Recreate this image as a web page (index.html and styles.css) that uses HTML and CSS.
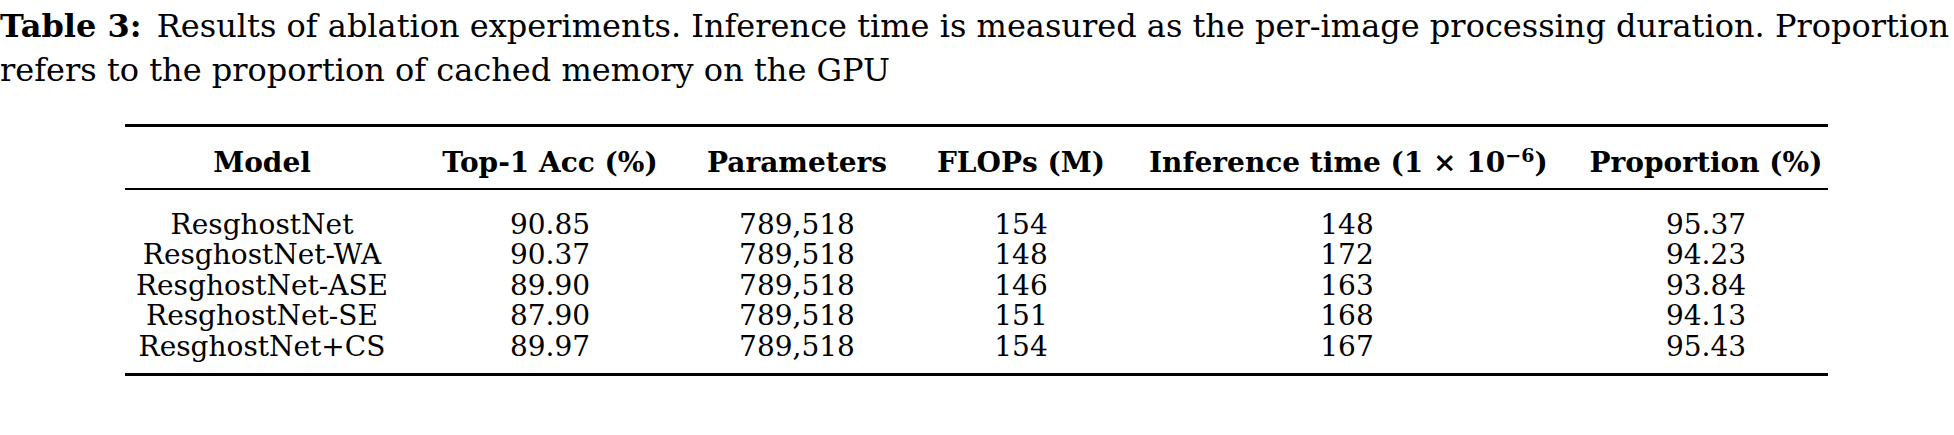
FILE: index.html
```html
<!DOCTYPE html>
<html lang="en">
<head>
    <meta charset="UTF-8">
    <title>Table 3</title>
    <link rel="stylesheet" href="styles.css">
</head>
<body>
    <p class="caption"><b class="label">Table 3:</b> Results of ablation experiments. Inference time is measured as the per-image processing duration. Proportion refers to the proportion of cached memory on the GPU</p>
    <div class="table-wrap">
        <table class="results">
            <colgroup>
                <col class="c-model">
                <col class="c-acc">
                <col class="c-params">
                <col class="c-flops">
                <col class="c-time">
                <col class="c-prop">
            </colgroup>
            <thead>
                <tr>
                    <th>Model</th>
                    <th>Top-1 Acc (%)</th>
                    <th>Parameters</th>
                    <th>FLOPs (M)</th>
                    <th>Inference time (1 × 10<sup>−6</sup>)</th>
                    <th class="last">Proportion (%)</th>
                </tr>
            </thead>
            <tbody>
                <tr>
                    <td>ResghostNet</td>
                    <td>90.85</td>
                    <td>789,518</td>
                    <td>154</td>
                    <td>148</td>
                    <td class="last">95.37</td>
                </tr>
                <tr>
                    <td>ResghostNet-WA</td>
                    <td>90.37</td>
                    <td>789,518</td>
                    <td>148</td>
                    <td>172</td>
                    <td class="last">94.23</td>
                </tr>
                <tr>
                    <td>ResghostNet-ASE</td>
                    <td>89.90</td>
                    <td>789,518</td>
                    <td>146</td>
                    <td>163</td>
                    <td class="last">93.84</td>
                </tr>
                <tr>
                    <td>ResghostNet-SE</td>
                    <td>87.90</td>
                    <td>789,518</td>
                    <td>151</td>
                    <td>168</td>
                    <td class="last">94.13</td>
                </tr>
                <tr>
                    <td>ResghostNet+CS</td>
                    <td>89.97</td>
                    <td>789,518</td>
                    <td>154</td>
                    <td>167</td>
                    <td class="last">95.43</td>
                </tr>
            </tbody>
        </table>
    </div>
</body>
</html>
```

FILE: styles.css
```css
body {
    margin: 0;
    background: #fff;
    color: #000;
    font-family: "DejaVu Serif", "Liberation Serif", serif;
}

.caption {
    margin: 0;
    padding-top: 4px;
    font-size: 32px;
    line-height: 44px;
}

.label {
    padding-right: 5px;
}

.table-wrap {
    padding-left: 125px;
    margin-top: 32px;
}

.results {
    table-layout: fixed;
    width: 1703px;
    border-collapse: separate;
    border-spacing: 0;
    border-top: 3px solid #000;
    border-bottom: 3px solid #000;
    font-size: 28px;
    line-height: 30.5px;
}

.c-model { width: 274px; }
.c-acc { width: 302px; }
.c-params { width: 192px; }
.c-flops { width: 256px; }
.c-time { width: 396px; }
.c-prop { width: 283px; }

.results th,
.results td {
    padding: 0;
    text-align: center;
    white-space: nowrap;
}

.results th {
    padding-top: 21px;
    padding-bottom: 9px;
    border-bottom: 2px solid #000;
}

/* last column sits a bit off-centre in the source */
.results .last {
    padding-left: 39px;
}

.results tbody tr:first-child td {
    padding-top: 20px;
}

.results tbody tr:last-child td {
    padding-bottom: 11px;
}

sup {
    font-size: 19px;
    line-height: 0;
    vertical-align: 10px;
}
```
